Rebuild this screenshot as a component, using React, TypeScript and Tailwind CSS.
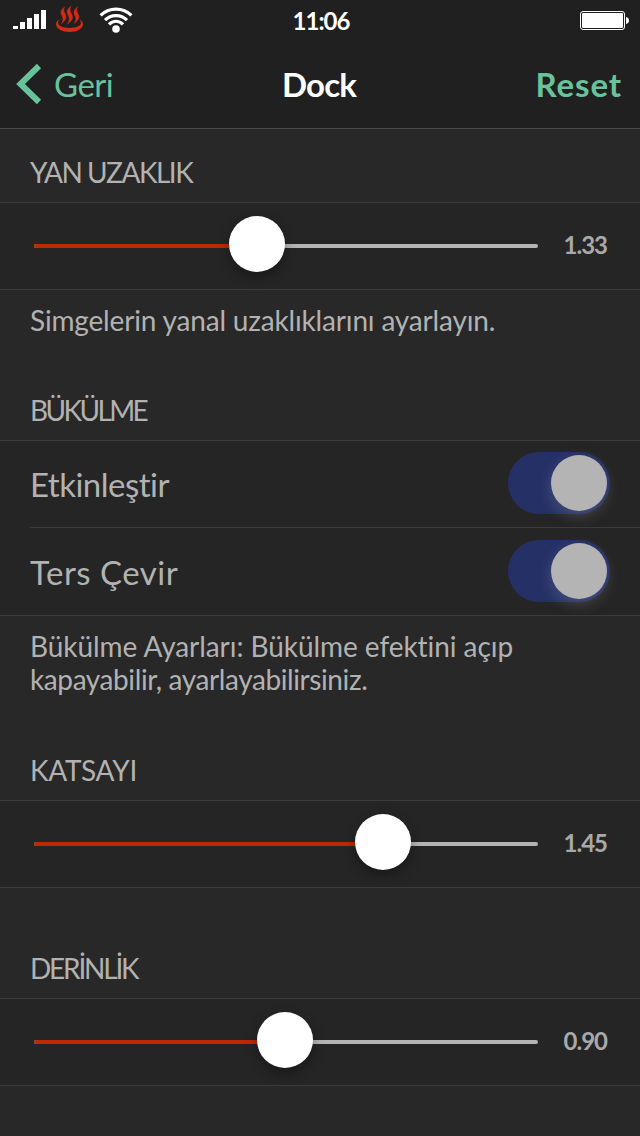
import { ReactNode, useState } from "react";
import clsx from "clsx";

function StatusBar() {
  return (
    <div className="flex h-10 items-center justify-between pr-[11px] pl-[13px] text-white">
      <div className="flex h-10 flex-1 items-start">
        <svg className="mt-[10px]" width="33" height="19" viewBox="0 0 33 19" fill="currentColor">
          <rect x="0" y="16" width="5" height="3" />
          <rect x="7" y="12" width="5" height="7" />
          <rect x="14" y="8" width="5" height="11" />
          <rect x="21" y="4" width="5" height="15" />
          <rect x="28" y="0" width="5" height="19" />
        </svg>
        <HotSpring />
        <svg className="mt-[7px] ml-4" width="34" height="26" viewBox="0 0 34 26" fill="none" stroke="currentColor">
          <path d="M1.600 8.400C10 0 24 0 32.400 8.400" strokeWidth="3.200" />
          <path d="M6 13.200C12 7 22 7 28 13.200" strokeWidth="3.200" />
          <path d="M10 17.400C14 13.200 20 13.200 24 17.400" strokeWidth="3.200" />
          <circle cx="17" cy="22" r="3.800" fill="currentColor" stroke="none" />
        </svg>
      </div>
      <span className="pt-0.5 text-2xl leading-[38px] font-bold tracking-[-1px]">11:06</span>
      <div className="flex flex-1 justify-end">
        <svg className="mt-0.5" width="49" height="20" viewBox="0 0 49 20">
          <rect x="0.5" y="0.5" width="44" height="18" rx="2.5" fill="none" stroke="currentColor" />
          <rect x="2" y="2" width="41" height="15" rx="1" fill="currentColor" />
          <path d="M46 6c2 .3 3 1.600 3 3.500s-1 3.200-3 3.500z" fill="currentColor" />
        </svg>
      </div>
    </div>
  );
}

function HotSpring() {
  return (
    <svg className="mt-[6px] ml-[10px]" width="27" height="27" viewBox="0 0 27 27" fill="#d42a17">
      <path d="M4 13C1.500 14.500 0 16 0 18c0 4.500 6 8 13.500 8S27 22.500 27 18c0-2-1.500-3.500-4-5 1.300 1.500 1.900 2.500 1.900 3.800 0 3.200-5 5.200-11.400 5.200S2.100 20 2.100 16.800c0-1.300.6-2.300 1.900-3.800z" />
      <path d="M8.500 1C5 4 4.200 6 5.700 9c1.500 2.800 2 4.800-.2 8.500 4.500-3.500 5.300-6 3.800-9.200C7.800 5.500 7 4 8.500 1z" stroke="#d42a17" strokeWidth="0.500" />
      <path d="M15 0c-4 3.200-4.600 5.500-3 8.800 1.600 3 2 5.400-.6 9.400 5-3.700 6-6.500 4.300-10C14.200 5.200 13.300 3.500 15 0z" stroke="#d42a17" strokeWidth="0.500" />
      <path d="M21.500 1c-3.500 3-4.300 5-2.800 8 1.500 2.800 2 4.800-.7 8.500 4.800-3.500 5.700-6 4.200-9.200C20.800 5.500 20 4 21.500 1z" stroke="#d42a17" strokeWidth="0.500" />
    </svg>
  );
}

function NavBar({ onReset }: { onReset: () => void }) {
  return (
    <nav className="flex h-[88px] items-center justify-between pr-[18px] pl-4 text-[33px] leading-[88px]">
      <button className="flex flex-1 items-center text-[#68c39c]">
        <svg width="26" height="42" viewBox="0 0 26 42" fill="none" stroke="currentColor" strokeWidth="6">
          <path d="M23 3L4.500 21L23 39" />
        </svg>
        <span className="ml-3 tracking-[-0.5px]">Geri</span>
      </button>
      <h1 className="font-bold tracking-[-0.8px] text-white">Dock</h1>
      <button className="flex-1 text-right font-bold tracking-[0.9px] text-[#68c39c]" onClick={onReset}>
        Reset
      </button>
    </nav>
  );
}

function GroupTitle({ children, className }: { children: ReactNode; className: string }) {
  return (
    <h2 className={clsx("flex items-end border-b border-[#3d3d3d] pb-4 pl-[30px] text-[28px] leading-7", className)}>
      {children}
    </h2>
  );
}

function GroupNote({ children }: { children: ReactNode }) {
  return <p className="pt-[14px] pl-[30px] text-[28px] leading-[33px]">{children}</p>;
}

type SliderProps = { value: number; percent: number };

function SliderRow({ value, percent }: SliderProps) {
  return (
    <div className="flex h-[87px] items-center border-b border-[#3d3d3d] bg-[#252525] pr-[33px] pl-[34px]">
      <div className="relative -mt-px h-1 w-[504px] rounded-full bg-[#b4b4b4]">
        <div className="h-1 rounded-full bg-[#bd2903]" style={{ width: `${percent}%` }} />
        <div
          className="absolute -top-7 size-14 -translate-x-1/2 rounded-full bg-white shadow-[0_5px_12px_rgba(0,0,0,0.35)]"
          style={{ left: `${percent}%` }}
        />
      </div>
      <span className="-mt-0.5 flex-1 text-right text-2xl leading-8 font-bold tracking-[-1px] text-[#a9a9a9]">
        {value.toFixed(2)}
      </span>
    </div>
  );
}

type SwitchProps = { label: ReactNode; on: boolean; onToggle: () => void; className?: string };

function SwitchRow({ label, on, onToggle, className }: SwitchProps) {
  return (
    <div className={clsx("flex items-start justify-between pr-[30px] text-[33px]", className)}>
      <span className="leading-[64px]">{label}</span>
      <button
        role="switch"
        aria-checked={on}
        onClick={onToggle}
        className={clsx(
          "flex h-[62px] w-[102px] items-center rounded-full p-[3px]",
          on ? "justify-end bg-[#253067]" : "justify-start bg-[#3d3d3d]",
        )}
      >
        <span className="size-14 rounded-full bg-[#b4b4b4] shadow-[0_5px_14px_rgba(180,180,180,0.25)]" />
      </button>
    </div>
  );
}

export default function App() {
  const [enabled, setEnabled] = useState(true);
  const [inverted, setInverted] = useState(true);

  const reset = () => {
    setEnabled(true);
    setInverted(true);
  };

  return (
    <div className="h-[1136px] w-[640px] overflow-hidden bg-[#282828] font-['Lato','Noto_Sans',sans-serif] text-[#b2b2b2]">
      <header className="h-[129px] border-b border-[#4a4a4a] bg-[#202020]">
        <StatusBar />
        <NavBar onReset={reset} />
      </header>

      <GroupTitle className="h-[74px] tracking-[-1.5px]">YAN UZAKLIK</GroupTitle>
      <SliderRow value={1.33} percent={44.25} />
      <GroupNote>
        <span className="tracking-[-0.17px]">Simgelerin yanal uzaklıklarını ayarlayın.</span>
      </GroupNote>

      <GroupTitle className="h-[104px] tracking-[-2.6px]">BÜKÜLME</GroupTitle>
      <div className="h-[175px] border-b border-[#3d3d3d] bg-[#252525] pl-[30px]">
        <SwitchRow
          className="h-[87px] border-b border-[#3d3d3d] pt-[11px] tracking-[-0.5px]"
          label="Etkinleştir"
          on={enabled}
          onToggle={() => setEnabled(!enabled)}
        />
        <SwitchRow
          className="pt-3 tracking-[0.5px]"
          label="Ters Çevir"
          on={inverted}
          onToggle={() => setInverted(!inverted)}
        />
      </div>
      <GroupNote>
        <span className="tracking-[-0.06px]">Bükülme Ayarları: Bükülme efektini açıp</span>
        <br />
        <span className="tracking-[-0.4px]">kapayabilir, ayarlayabilirsiniz.</span>
      </GroupNote>

      <GroupTitle className="h-[105px] tracking-[-0.3px]">KATSAYI</GroupTitle>
      <SliderRow value={1.45} percent={69.25} />

      <GroupTitle className="h-[111px] tracking-[-2.2px]">DERİNLİK</GroupTitle>
      <SliderRow value={0.9} percent={49.8} />
    </div>
  );
}
